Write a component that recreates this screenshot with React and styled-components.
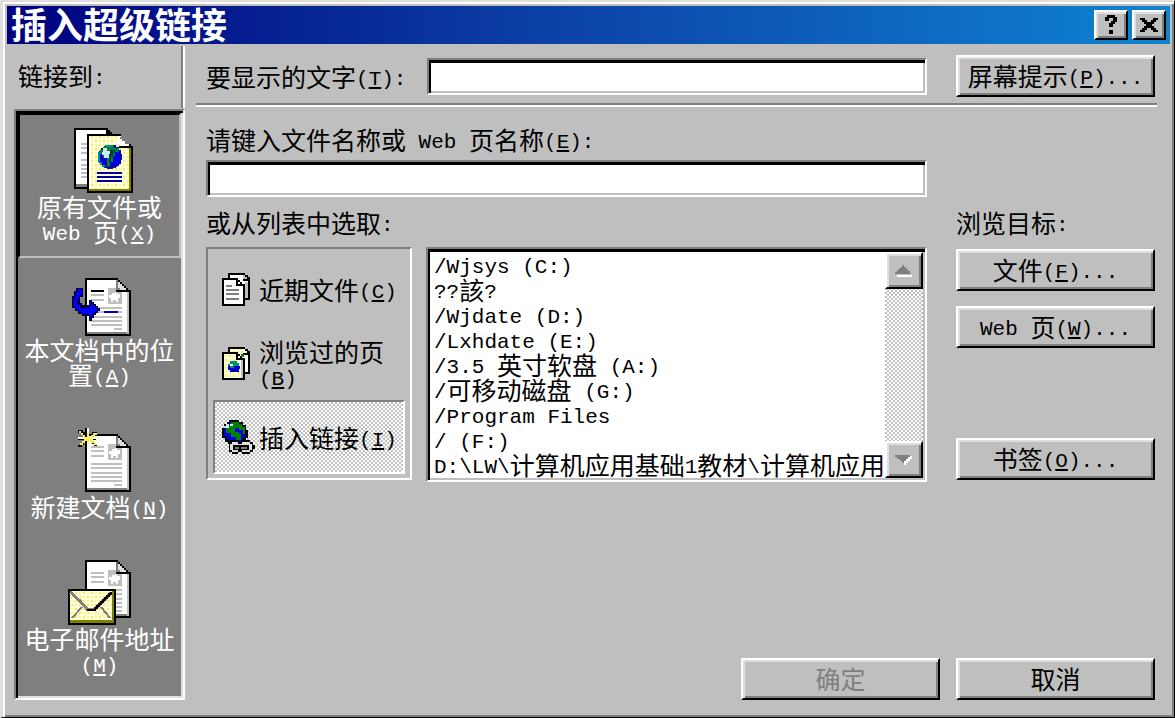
import React, { useId } from 'react';
import styled, { createGlobalStyle, css } from 'styled-components';

const face = '#bfbfbf';
const light = '#dfdfdf';
const shade = '#7f7f7f';

const Global = createGlobalStyle`
  *, *::before, *::after { box-sizing: border-box; }
  body { margin: 0; background: ${face}; }
  button, input { font: inherit; color: inherit; }
`;

const raised = css`
  border: 2px solid;
  border-color: #fff #000 #000 #fff;
  box-shadow: inset 2px 2px ${light}, inset -2px -2px ${shade};
  background: ${face};
`;

const checker = css`
  background: repeating-conic-gradient(#fff 0 25%, ${face} 0 50%) 0 0 / 4px 4px;
`;

const Dialog = styled.main`
  display: flex;
  flex-direction: column;
  min-height: 100vh;
  padding: 4px;
  background: ${face};
  color: #000;
  font-family: 'Noto Sans CJK SC', sans-serif;
  font-size: 25px;
  line-height: 25px;
  border-style: solid;
  border-width: 2px 1px 1px 3px;
  border-color: ${light} #000 #000 ${light};
  box-shadow: inset 2px 2px #fff, inset -2px -2px ${shade};
`;

const TitleBar = styled.header`
  display: flex;
  align-items: center;
  gap: 4px;
  height: 38px;
  padding: 0 4px;
  color: #fff;
  background: linear-gradient(90deg, #00007f, #0c46a8 50%, #0f84d0);
`;

const Title = styled.h1`
  flex: 1;
  margin: 0;
  padding-bottom: 4px;
  font-size: 36px;
  line-height: 36px;
  font-weight: 700;
  white-space: nowrap;
`;

const CaptionButton = styled.button`
  ${raised}
  display: grid;
  place-items: center;
  width: 34px;
  height: 30px;
  padding: 0;
`;

const Body = styled.div`
  flex: 1;
  display: flex;
  padding-bottom: 13px;
`;

const Sidebar = styled.nav`
  display: flex;
  flex-direction: column;
  width: 178px;
`;

const SidebarHead = styled.div`
  display: flex;
  align-items: center;
  height: 62px;
  margin: 2px 0 1px;
  padding: 0 0 4px 11px;
  border-right: 2px solid #fff;
  box-shadow: inset -2px 0 ${shade};
`;

const Places = styled.div`
  flex: 1;
  margin-left: 7px;
  padding: 2px;
  border: 2px solid;
  border-color: ${shade} #fff #fff ${shade};
  background: ${shade};
  box-shadow: inset 2px 2px #000, inset -2px -2px ${light};
`;

const Place = styled.button`
  display: flex;
  flex-direction: column;
  align-items: center;
  width: 100%;
  padding: 11px 0 26px;
  border: 2px solid transparent;
  background: none;
  color: #fff;
  white-space: nowrap;
  &:last-child { padding-bottom: 11px; }
  ${(p) => p.$selected && css`
    padding: 13px 0 12px;
    border-color: #000 ${face} ${face} #000;
  `}
`;

const Main = styled.section`
  flex: 1;
  min-width: 0;
  display: flex;
  flex-direction: column;
  padding: 11px 13px 0 11px;
`;

const DisplayRow = styled.div`
  display: flex;
  align-items: center;
  padding: 0 2px 0 10px;
`;

const DisplayLabel = styled.label`
  width: 221px;
`;

const TextField = styled.input`
  display: block;
  flex: 1;
  width: 100%;
  min-width: 0;
  height: 37px;
  padding: 0 8px;
  border: 2px solid;
  border-color: ${shade} #fff #fff ${shade};
  border-radius: 0;
  background: #fff;
  box-shadow: inset 2px 3px #000, inset -2px -2px ${face};
  outline: none;
`;

const PushButton = styled.button`
  ${raised}
  width: 199px;
  height: 42px;
  padding: 0 0 2px;
  white-space: nowrap;
  margin-left: ${(p) => (p.$apart ? '29px' : '0')};
  &:disabled { color: ${shade}; }
`;

const Divider = styled.hr`
  width: 100%;
  margin: 6px 0 0;
  border: solid;
  border-width: 2px 0;
  border-color: ${shade} transparent #fff;
`;

const Content = styled.div`
  display: grid;
  grid-template-columns: minmax(0, 1fr) 199px;
  column-gap: 29px;
  padding: 20px 2px 0 10px;
`;

const FileField = styled.div`
  grid-column: 1;
  display: grid;
  gap: 8px;
`;

const Caption = styled.h2`
  grid-column: ${(p) => p.$column};
  margin: 13px 0 12px;
  font: inherit;
`;

const Chooser = styled.div`
  display: flex;
  gap: 14px;
  height: 235px;
`;

const Tabs = styled.div`
  display: flex;
  flex-direction: column;
  width: 206px;
  height: 233px;
  padding: 4px 5px;
  border: 2px solid;
  border-color: ${shade} #fff #fff ${shade};
`;

const Tab = styled.button`
  flex: 1;
  display: flex;
  align-items: center;
  gap: 4px;
  padding: 0 6px;
  border: 2px solid transparent;
  background: none;
  text-align: left;
  white-space: nowrap;
  ${(p) => p.$selected && css`
    ${checker}
    border-color: ${shade} #fff #fff ${shade};
  `}
`;

const ListFrame = styled.div`
  flex: 1;
  min-width: 0;
  display: flex;
  padding: 3px 2px 2px 2px;
  border: 2px solid;
  border-color: ${shade} #fff #fff ${shade};
  background: #fff;
  box-shadow: inset 2px 3px #000, inset -2px -2px ${face};
`;

const List = styled.ul`
  flex: 1;
  min-width: 0;
  margin: 0;
  padding: 0 0 0 4px;
  list-style: none;
  overflow: hidden;
  white-space: pre;
`;

const ListItem = styled.li`
  height: 25px;
`;

const ScrollBar = styled.div`
  ${checker}
  display: flex;
  flex-direction: column;
  justify-content: space-between;
  width: 38px;
`;

const ScrollButton = styled.button`
  ${raised}
  display: grid;
  place-items: center;
  height: 37px;
  padding: 0;
`;

const Targets = styled.div`
  display: flex;
  flex-direction: column;
  gap: 15px;
  padding: 2px 0;
`;

const Spacer = styled.div`
  flex: 1;
`;

const Footer = styled.footer`
  display: flex;
  justify-content: flex-end;
  gap: 16px;
  margin-top: auto;
  padding-right: 2px;
`;

const Half = styled.span`
  font-family: 'Liberation Mono', monospace;
  font-size: 21px;
  line-height: 0;
  vertical-align: 2px;
  white-space: pre;
`;

/* Sets half-width characters in the monospace face; "&" marks the access key. */
function Label({ text }) {
  return text.split(/([\x20-\x7e]+)/).filter(Boolean).map((run, i) => {
    if (!/^[\x20-\x7e]/.test(run)) return <React.Fragment key={i}>{run}</React.Fragment>;
    const at = run.indexOf('&');
    if (at < 0) return <Half key={i}>{run}</Half>;
    return <Half key={i}>{run.slice(0, at)}<u>{run[at + 1]}</u>{run.slice(at + 2)}</Half>;
  });
}

function Lines({ lines }) {
  return (
    <span>
      {lines.map((line, i) => (
        <React.Fragment key={line}>{i > 0 && <br />}<Label text={line} /></React.Fragment>
      ))}
    </span>
  );
}

function Drawing({ size, children }) {
  return (
    <svg width={size} height={size} viewBox={`0 0 ${size} ${size}`} shapeRendering="crispEdges" aria-hidden="true">
      {children}
    </svg>
  );
}

function Dither({ id }) {
  return (
    <pattern id={id} width="8" height="8" patternUnits="userSpaceOnUse">
      <rect width="8" height="8" fill="#ffffd8" />
      <rect width="2" height="2" fill="#f2ec62" />
      <rect x="4" y="4" width="2" height="2" fill="#f2ec62" />
      <rect x="4" y="0" width="2" height="2" fill="#fbf7a0" />
      <rect x="0" y="4" width="2" height="2" fill="#fbf7a0" />
    </pattern>
  );
}

function Page({ y, lead }) {
  return (
    <g transform={`translate(18 ${y})`}>
      <path d="M0 0H33V2H35V4H37V6H39V8H41V10H43V12H46V58H0Z" fill="#000" />
      <path d="M2 2H31V14H44V56H2Z" fill="#fff" />
      <path d="M33 4H35V6H37V8H39V10H41V12H33Z" fill="#dfdfdf" />
      <path d="M31 2H33V10H35V12H31Z" fill={shade} />
      <path d="M31 12H44V14H31Z" fill="#000" />
      <path d="M2 54H44V56H2Z" fill={shade} />
      <path d="M42 14H44V56H42Z" fill={face} />
      {lead && <path d="M6 12H19V14H6Z" fill="#000" />}
      {!lead && <path d="M6 12H19V14H6Z" fill={face} />}
      <path d="M6 16H19V18H6ZM6 21H19V23H6Z" fill={face} />
      <path d="M23 10H31V14H37V26H23Z" fill={face} />
      <path d="M30 14H32V16H35V20H33V24H31V22H28V24H26V20H24V17H27V15H30Z" fill="#fff" />
      <path d="M6 29H37V31H6ZM6 33H37V35H6ZM6 38H37V40H6ZM6 42H37V44H6ZM6 46H37V48H6ZM29 50H37V52H29Z" fill={face} />
    </g>
  );
}

function WebPagesIcon() {
  const id = useId();
  return (
    <Drawing size={66}>
      <defs><Dither id={id} /></defs>
      <path d="M7 0H41V2H43V4H45V61H7Z" fill="#000" />
      <path d="M9 2H39V56H9Z" fill="#fff" />
      <path d="M9 56H22V59H9Z" fill={shade} />
      <path d="M14 15H20V17H14ZM14 19H20V21H14ZM14 24H20V26H14ZM14 31H20V33H14ZM14 36H20V38H14ZM14 40H20V42H14ZM14 44H20V46H14ZM14 48H20V50H14Z" fill={face} />
      <path d="M20 6H54V8H56V10H58V12H60V14H62V16H64V18H66V65H20Z" fill="#000" />
      <path d="M22 8H52V20H64V63H22Z" fill={`url(#${id})`} />
      <path d="M52 8H54V10H56V12H58V14H60V16H62V18H52Z" fill="#fff" />
      <path d="M54 8H56V10H58V12H60V14H62V16H58V13H55V11H53Z" fill={shade} />
      <path d="M52 18H64V20H52Z" fill="#000" />
      <path d="M22 61H62V20H64V63H22Z" fill="#7f7f00" />
      <path d="M30 44H55V46H30ZM30 48H55V50H30ZM30 52H55V54H30Z" fill="#00009f" />
      <circle cx="43" cy="29" r="12" fill="#00206a" />
      <path d="M36 19H41V17H49V19H52V22H54V36H52V38H49V39H39V37H36V34H33V22H36Z" fill="#0000df" />
      <path d="M36 19H40V17H47V20H52V24H48V28H46V34H43V38H40V30H36V26H33V22H36Z" fill="#007f3f" />
      <path d="M36 20H40V23H43V30H37V27H35V24H36Z" fill="#cfe8e8" />
      <path d="M31 24H33V34H35V37H38V39H35V37H33V34H31ZM38 17H45V19H38Z" fill="#009090" />
      <path d="M43 22H48V25H46V28H44V34H42V26H43Z" fill="#003f3f" />
    </Drawing>
  );
}

function PlaceInPageIcon() {
  return (
    <Drawing size={66}>
      <Page y={7} lead />
      <path d="M37 40H51V42H37Z" fill="#0000bf" />
      <path d="M11 17H16V26H13V32H15V34H22V29H25V31H27V33H29V35H31V37H33V40H31V42H29V44H27V47H25V50H22V45H15V43H11V40H8V37H5V25H7V20H9V17Z" fill="#00003f" />
      <path d="M11 18H15V24H12V28H10V34H13V37H23V32H25V34H27V36H30V41H27V43H25V46H22V43H15V41H12V39H9V36H7V26H9V21H11Z" fill="#0000ff" />
    </Drawing>
  );
}

function NewPageIcon() {
  return (
    <Drawing size={66}>
      <Page y={6} />
      <path d="M18 0H22V8H18ZM11 2H16V4H18V7H14V5H11ZM25 4H30V6H27V8H23V6H25ZM11 10H29V12H11ZM11 17H13V15H17V17H15V19H11ZM18 13H22V19H18ZM25 13H27V15H30V18H27V16H25Z" fill="#000" />
      <path d="M20 0H22V19H20ZM12 3H14V5H16V7H18V9H24V7H26V5H30V7H28V9H26V13H28V15H30V17H27V15H24V13H18V15H16V17H13V15H15V13H17V11H14V9H16V7H14V5H12Z" fill="#f8f050" />
      <path d="M11 9H17V11H11ZM20 0H22V4H20ZM24 9H30V11H24ZM20 15H22V19H20Z" fill="#fff" />
    </Drawing>
  );
}

function MailIcon() {
  const id = useId();
  return (
    <Drawing size={66}>
      <defs><Dither id={id} /></defs>
      <Page y={0} />
      <path d="M1 29H49V65H1Z" fill="#000" />
      <path d="M3 31H47V63H3Z" fill={`url(#${id})`} />
      <path d="M3 60H45V31H47V63H3Z" fill="#7f7f00" />
      <path d="M3 32L13 41L20 49H28L44 33" fill="none" stroke={shade} strokeWidth="3" />
      <path d="M5 58L15 47M43 58L34 47" fill="none" stroke={shade} strokeWidth="2" />
      <path d="M20 50H28V48H30V46H32V44H34V42H36V40H38V38H40V36H42V34H44V32" fill="none" stroke="#000" strokeWidth="2" />
    </Drawing>
  );
}

function SmallPages({ fill, line }) {
  return (
    <>
      <path d="M7 0H24V2H27V4H29V27H7Z" fill="#000" />
      <path d="M9 2H22V8H27V25H9Z" fill={fill} />
      <path d="M22 2H24V4H26V6H22ZM24 9H27V25H24Z" fill={line} />
      <path d="M1 5H17V7H19V9H21V11H24V33H1Z" fill="#000" />
      <path d="M3 7H15V13H22V31H3Z" fill={fill} />
      <path d="M17 9H19V11H17Z" fill="#fff" />
    </>
  );
}

function RecentIcon() {
  return (
    <Drawing size={34}>
      <SmallPages fill="#fff" line={face} />
      <path d="M5 12H11V14H5ZM5 16H18V18H5ZM5 20H18V22H5ZM5 25H18V27H5Z" fill={shade} />
    </Drawing>
  );
}

function BrowsedIcon() {
  const id = useId();
  return (
    <Drawing size={34}>
      <defs><Dither id={id} /></defs>
      <SmallPages fill={`url(#${id})`} line="#fff" />
      <path d="M20 13H22V31H20Z" fill={face} />
      <path d="M20 7H23V10H20Z" fill="#007f3f" />
      <path d="M9 14H16V16H18V19H19V22H18V25H9V23H7V17H9Z" fill="#0000cf" />
      <path d="M9 14H16V16H18V19H13V21H9V19H7V17H9Z" fill="#009070" />
      <path d="M9 17H12V19H9Z" fill="#fff" />
    </Drawing>
  );
}

function GlobeLinkIcon() {
  return (
    <Drawing size={34}>
      <path d="M8 0H18V2H22V5H25V10H27V18H25V21H22V24H7V22H4V18H1V8H3V4H6V2H8Z" fill="#000" />
      <path d="M8 2H18V4H21V7H24V18H21V21H8V19H5V16H3V8H5V4H8Z" fill="#0000df" />
      <path d="M10 2H18V4H21V7H24V14H22V10H18V8H14V12H18V14H20V20H15V17H10V13H5V8H8V5H10Z" fill="#007f00" />
      <path d="M5 4H8V8H3V6H5ZM9 4H12V6H9Z" fill="#cfe8e8" />
      <path d="M9 20H17V22H21V20H29V22H32V25H34V29H32V32H29V34H21V32H17V34H11V32H8V22H9Z" fill="#000" />
      <path d="M11 22H17V24H21V22H29V24H31V30H29V32H21V30H17V32H11V30H9V24H11Z" fill="#dfdfdf" />
      <path d="M12 25H28V30H12Z" fill="#000" />
      <path d="M14 27H18V29H14ZM20 27H26V29H20Z" fill={shade} />
    </Drawing>
  );
}

const places = [
  { lines: ['原有文件或', 'Web 页(&X)'], Icon: WebPagesIcon },
  { lines: ['本文档中的位', '置(&A)'], Icon: PlaceInPageIcon },
  { lines: ['新建文档(&N)'], Icon: NewPageIcon },
  { lines: ['电子邮件地址', '(&M)'], Icon: MailIcon },
];

const tabs = [
  { lines: ['近期文件(&C)'], Icon: RecentIcon },
  { lines: ['浏览过的页', '(&B)'], Icon: BrowsedIcon },
  { lines: ['插入链接(&I)'], Icon: GlobeLinkIcon },
];

const entries = [
  '/Wjsys (C:)',
  '??該?',
  '/Wjdate (D:)',
  '/Lxhdate (E:)',
  '/3.5 英寸软盘 (A:)',
  '/可移动磁盘 (G:)',
  '/Program Files',
  '/ (F:)',
  'D:\\LW\\计算机应用基础1教材\\计算机应用',
];

export default function App() {
  return (
    <>
      <Global />
      <Dialog role="dialog" aria-labelledby="dialog-title">
        <TitleBar>
          <Title id="dialog-title">插入超级链接</Title>
          <CaptionButton aria-label="帮助">
            <svg width="14" height="20" viewBox="0 0 14 20" shapeRendering="crispEdges" aria-hidden="true">
              <path d="M3 0H11V2H13V7H11V9H9V12H5V8H7V6H9V3H5V6H1V2H3ZM5 15H9V19H5Z" />
            </svg>
          </CaptionButton>
          <CaptionButton aria-label="关闭">
            <svg width="18" height="16" viewBox="0 0 18 16" shapeRendering="crispEdges" aria-hidden="true">
              <path d="M0 1H5V3H7V5H11V3H13V1H18V3H16V5H14V7H12V9H14V11H16V13H18V15H13V13H11V11H7V13H5V15H0V13H2V11H4V9H6V7H4V5H2V3H0Z" />
            </svg>
          </CaptionButton>
        </TitleBar>
        <Body>
          <Sidebar aria-labelledby="link-to">
            <SidebarHead id="link-to"><span><Label text="链接到:" /></span></SidebarHead>
            <Places>
              {places.map(({ lines, Icon }, i) => (
                <Place key={lines[0]} $selected={i === 0} aria-pressed={i === 0}>
                  <Icon />
                  <Lines lines={lines} />
                </Place>
              ))}
            </Places>
          </Sidebar>
          <Main>
            <DisplayRow>
              <DisplayLabel htmlFor="display-text"><Label text="要显示的文字(&T):" /></DisplayLabel>
              <TextField id="display-text" />
              <PushButton $apart><Label text="屏幕提示(&P)..." /></PushButton>
            </DisplayRow>
            <Divider />
            <Content>
              <FileField>
                <label htmlFor="file-name"><Label text="请键入文件名称或 Web 页名称(&E):" /></label>
                <TextField id="file-name" />
              </FileField>
              <Caption $column={1}><Label text="或从列表中选取:" /></Caption>
              <Caption $column={2}><Label text="浏览目标:" /></Caption>
              <Chooser>
                <Tabs role="tablist">
                  {tabs.map(({ lines, Icon }, i) => (
                    <Tab key={lines[0]} role="tab" $selected={i === 2} aria-selected={i === 2}>
                      <Icon />
                      <Lines lines={lines} />
                    </Tab>
                  ))}
                </Tabs>
                <ListFrame>
                  <List role="listbox" aria-label="插入链接">
                    {entries.map((entry) => (
                      <ListItem key={entry} role="option"><Label text={entry} /></ListItem>
                    ))}
                  </List>
                  <ScrollBar>
                    <ScrollButton aria-label="向上滚动">
                      <svg width="18" height="12" viewBox="0 0 18 12" shapeRendering="crispEdges" aria-hidden="true">
                        <path d="M2 10H17V12H2Z" fill="#fff" />
                        <path d="M7 0H9V2H11V4H13V6H15V9H0V7H2V5H4V3H6V2H7Z" fill={shade} />
                      </svg>
                    </ScrollButton>
                    <ScrollButton aria-label="向下滚动">
                      <svg width="18" height="12" viewBox="0 0 18 12" shapeRendering="crispEdges" aria-hidden="true">
                        <path d="M17 2V5H15V7H13V9H11V11H9V6L13 2Z" fill="#fff" />
                        <path d="M0 1H15V3H13V5H11V7H9V9H7V7H5V5H2V3H0Z" fill={shade} />
                      </svg>
                    </ScrollButton>
                  </ScrollBar>
                </ListFrame>
              </Chooser>
              <Targets>
                <PushButton><Label text="文件(&F)..." /></PushButton>
                <PushButton><Label text="Web 页(&W)..." /></PushButton>
                <Spacer />
                <PushButton><Label text="书签(&O)..." /></PushButton>
              </Targets>
            </Content>
            <Footer>
              <PushButton disabled>确定</PushButton>
              <PushButton>取消</PushButton>
            </Footer>
          </Main>
        </Body>
      </Dialog>
    </>
  );
}
